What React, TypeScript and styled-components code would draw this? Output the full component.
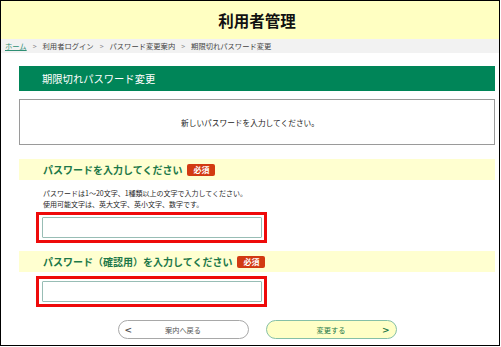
import * as React from 'react';
import styled, { createGlobalStyle } from 'styled-components';

const GlobalStyle = createGlobalStyle`
  html, body {
    margin: 0;
    padding: 0;
    background: #fff;
  }
  * {
    box-sizing: border-box;
  }
`;

const Frame = styled.div`
  width: 500px;
  height: 346px;
  border: 1px solid #000;
  overflow: hidden;
  background: #fff;
  font-family: 'Noto Sans CJK JP', 'Noto Sans', sans-serif;
  color: #333;
`;

const Header = styled.header`
  height: 38px;
  display: flex;
  align-items: center;
  justify-content: center;
  padding: 0 4px 0 18px;
  background: #ffffc2;
`;

const Title = styled.h1`
  margin: 0;
  font-size: 15.5px;
  font-weight: 700;
  color: #111;
`;

const Breadcrumb = styled.nav`
  height: 14px;
  display: flex;
  align-items: center;
  gap: 6px;
  padding-left: 4px;
  background: #f2f2f2;
  font-size: 7.3px;
  color: #444;
`;

const Crumb = styled.span<{ $link?: boolean }>`
  color: ${(p) => (p.$link ? '#2f8f74' : '#444')};
  text-decoration: ${(p) => (p.$link ? 'underline' : 'none')};
`;

const Sep = styled.span`
  color: #888;
  font-size: 7px;
`;

const Main = styled.main`
  padding: 13px 4px 0 18px;
`;

const PageHeading = styled.h2`
  margin: 0;
  height: 25px;
  display: flex;
  align-items: center;
  padding-left: 23px;
  background: #008558;
  color: #fff;
  font-size: 10.3px;
  font-weight: 400;
`;

const Notice = styled.div`
  margin-top: 8px;
  height: 46px;
  display: flex;
  align-items: center;
  justify-content: center;
  padding-right: 14px;
  border: 1px solid #9a9a9a;
  font-size: 7.7px;
  color: #1a1a1a;
`;

const SectionHead = styled.div<{ $top: number }>`
  margin-top: ${(p) => p.$top}px;
  height: 21px;
  display: flex;
  align-items: center;
  gap: 5px;
  padding-left: 24px;
  background: #ffffd0;
  color: #1d7848;
  font-size: 10px;
  font-weight: 700;
`;

const Required = styled.span`
  display: inline-flex;
  align-items: center;
  justify-content: center;
  width: 28px;
  height: 12px;
  border-radius: 2px;
  background: #d23a12;
  color: #fff;
  font-size: 8px;
  font-weight: 700;
`;

const Help = styled.p`
  margin: 8px 0 0;
  padding-left: 24px;
  font-size: 7px;
  line-height: 11px;
  color: #2a2a2a;
`;

const Highlight = styled.div<{ $top: number }>`
  margin: ${(p) => p.$top}px 0 0 17px;
  width: 231px;
  height: 31px;
  padding: 1px 2px 2px 3px;
  border: 3px solid #ee0a0a;
  display: flex;
  align-items: center;
`;

const Field = styled.input`
  width: 220px;
  height: 21px;
  border: 1px solid #98bdb5;
  border-radius: 1px;
  background: #fff;
  outline: none;
  padding: 0 4px;
`;

const Actions = styled.div`
  margin-top: 13px;
  display: flex;
  justify-content: center;
  gap: 17px;
`;

const Button = styled.button<{ $primary?: boolean }>`
  position: relative;
  width: 131px;
  height: 19px;
  border-radius: 10px;
  border: 1px solid ${(p) => (p.$primary ? '#86c0a6' : '#a8a8a8')};
  background: ${(p) => (p.$primary ? '#ffffc6' : '#fff')};
  color: ${(p) => (p.$primary ? '#1d7848' : '#555')};
  font-family: inherit;
  font-size: 7.2px;
  padding: 0;
  display: flex;
  align-items: center;
  justify-content: center;
  cursor: pointer;
`;

const Arrow = styled.span<{ $side: 'left' | 'right' }>`
  position: absolute;
  top: 50%;
  transform: translateY(-50%);
  ${(p) => (p.$side === 'left' ? 'left: 6px;' : 'right: 6px;')}
  font-family: 'DejaVu Sans', sans-serif;
  font-size: 9px;
  font-weight: 700;
  line-height: 1;
`;

export default function App() {
  return (
    <>
      <GlobalStyle />
      <Frame>
        <Header>
          <Title>利用者管理</Title>
        </Header>
        <Breadcrumb>
          <Crumb $link>ホーム</Crumb>
          <Sep>&gt;</Sep>
          <Crumb>利用者ログイン</Crumb>
          <Sep>&gt;</Sep>
          <Crumb>パスワード変更案内</Crumb>
          <Sep>&gt;</Sep>
          <Crumb>期限切れパスワード変更</Crumb>
        </Breadcrumb>
        <Main>
          <PageHeading>期限切れパスワード変更</PageHeading>
          <Notice>新しいパスワードを入力してください。</Notice>

          <SectionHead $top={14}>
            パスワードを入力してください
            <Required>必須</Required>
          </SectionHead>
          <Help>
            パスワードは1～20文字、1種類以上の文字で入力してください。
            <br />
            使用可能文字は、英大文字、英小文字、数字です。
          </Help>
          <Highlight $top={2}>
            <Field type="password" />
          </Highlight>

          <SectionHead $top={8}>
            パスワード（確認用）を入力してください
            <Required>必須</Required>
          </SectionHead>
          <Highlight $top={4}>
            <Field type="password" />
          </Highlight>

          <Actions>
            <Button>
              <Arrow $side="left">&lt;</Arrow>
              案内へ戻る
            </Button>
            <Button $primary>
              変更する
              <Arrow $side="right">&gt;</Arrow>
            </Button>
          </Actions>
        </Main>
      </Frame>
    </>
  );
}
